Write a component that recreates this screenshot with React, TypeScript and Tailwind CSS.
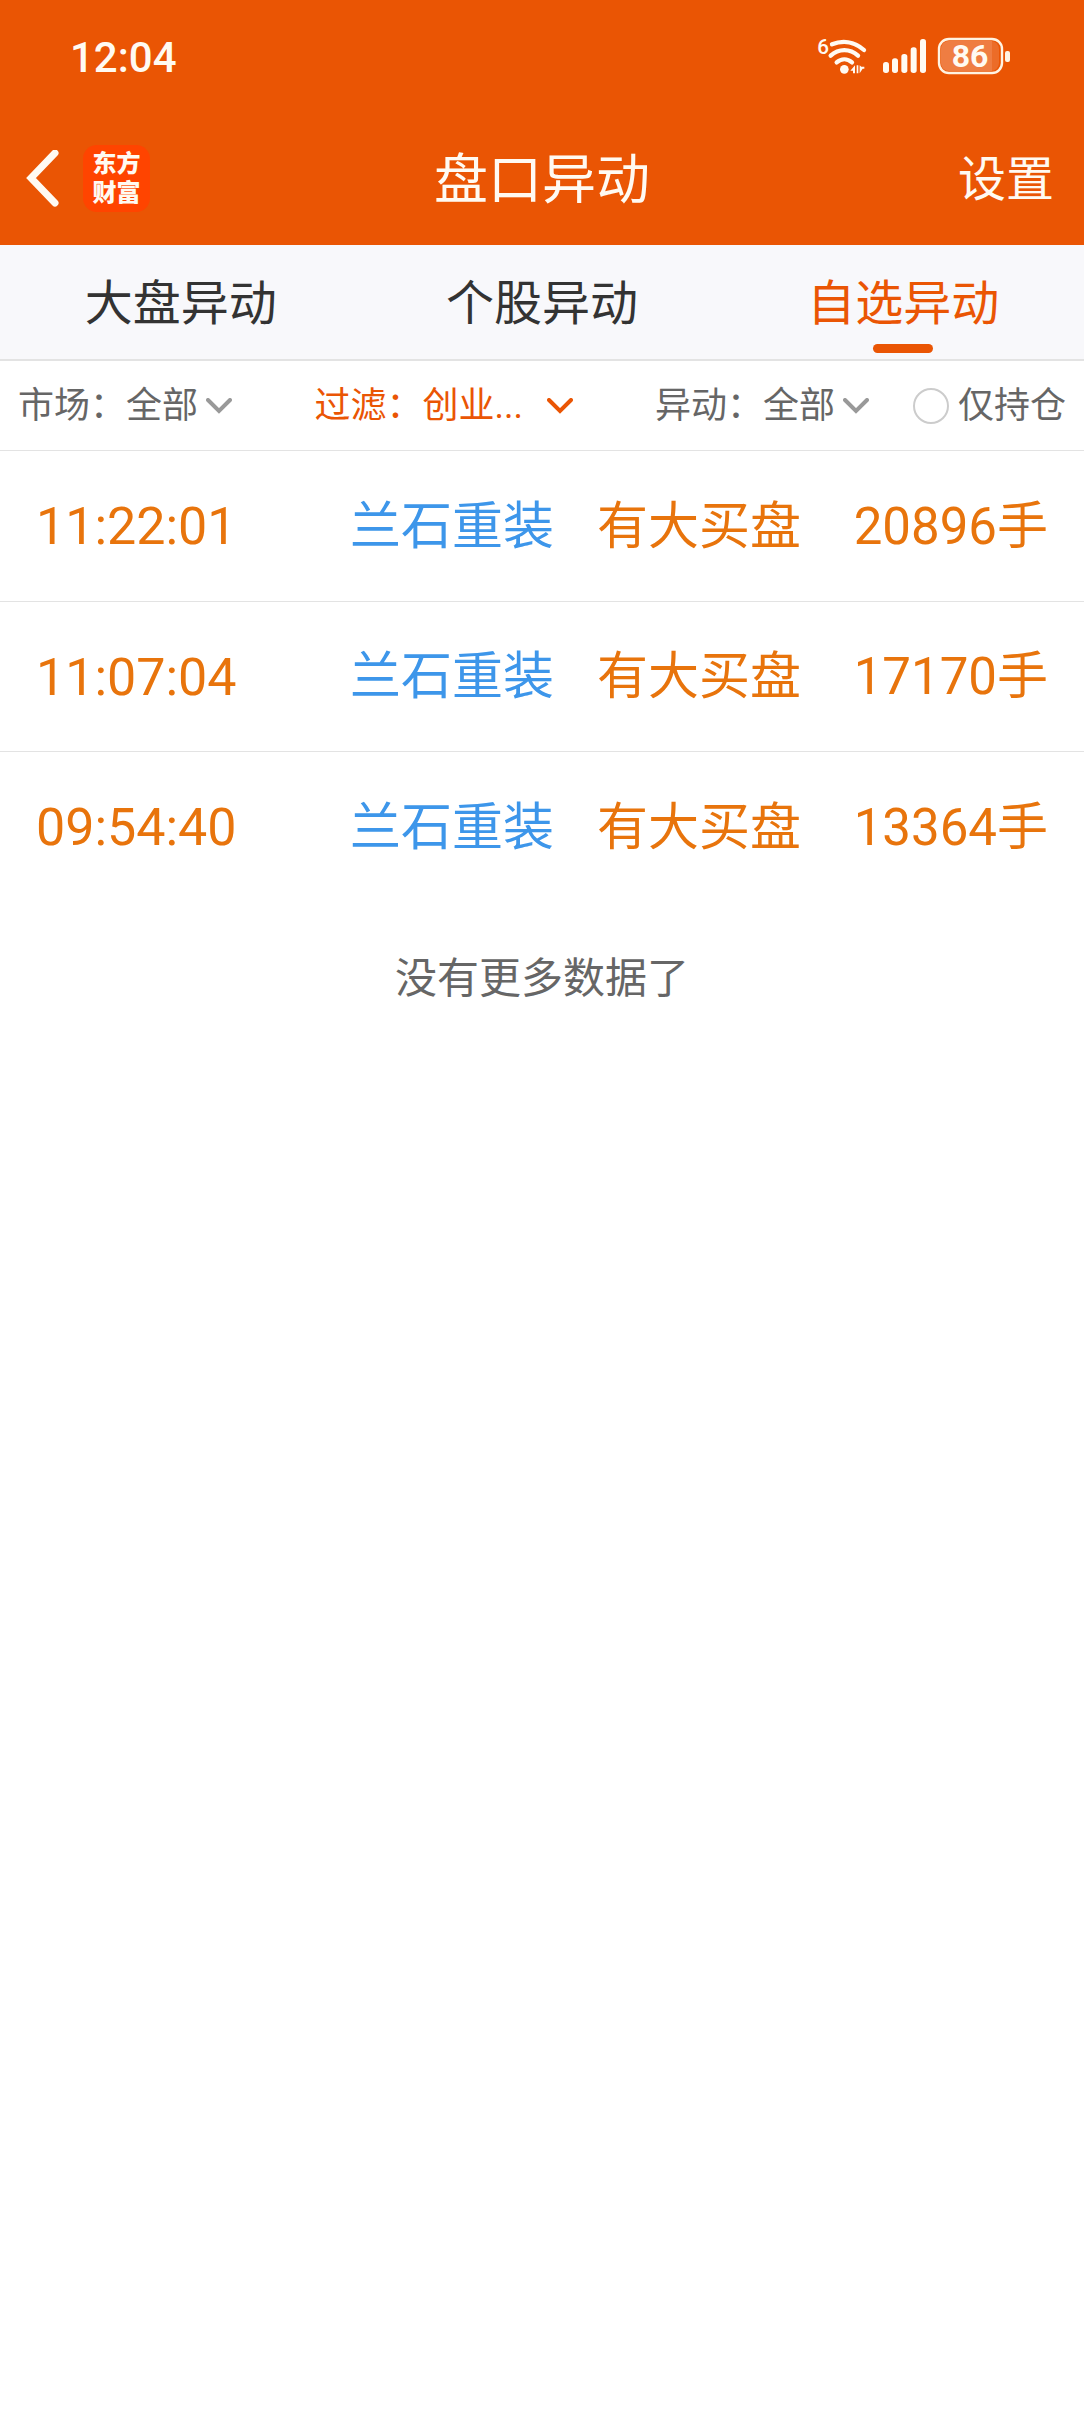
import { useState } from 'react'

interface Alert {
  time: string
  stock: string
  event: string
  volume: string
}

const TABS = ['大盘异动', '个股异动', '自选异动']

const ALERTS: Alert[] = [
  { time: '11:22:01', stock: '兰石重装', event: '有大买盘', volume: '20896手' },
  { time: '11:07:04', stock: '兰石重装', event: '有大买盘', volume: '17170手' },
  { time: '09:54:40', stock: '兰石重装', event: '有大买盘', volume: '13364手' },
]

function WifiIcon() {
  return (
    <svg width="54" height="48" viewBox="38 33 162 144" fill="none" stroke="currentColor" aria-hidden="true">
      <text x="48" y="100" fontSize="62" fontWeight="500" fill="currentColor" stroke="none">6</text>
      <path d="M92 70C122 58 158 60 188 87" strokeWidth="13" strokeLinecap="round" />
      <path d="M88 104C112 82 146 82 170 104" strokeWidth="13" strokeLinecap="round" />
      <path d="M106 124C120 112 138 112 152 124" strokeWidth="13" strokeLinecap="round" />
      <circle cx="129" cy="145" r="13" fill="currentColor" stroke="none" />
      <path d="M147 149L161 133V157H155V149ZM166 133H171V157H166ZM175 133V157L184 143H189V137H180Z" fill="currentColor" stroke="none" />
    </svg>
  )
}

function SignalIcon() {
  return (
    <svg width="44" height="36" viewBox="246 53 132 108" fill="currentColor" aria-hidden="true">
      <rect x="246" y="125" width="18" height="33" rx="8" />
      <rect x="273" y="114" width="18" height="44" rx="8" />
      <rect x="301" y="101" width="18" height="57" rx="8" />
      <rect x="329" y="81" width="18" height="77" rx="8" />
      <rect x="357" y="56" width="18" height="102" rx="8" />
    </svg>
  )
}

function BatteryIcon({ level }: { level: number }) {
  return (
    <svg width="73" height="38" viewBox="0 0 73 38" fill="none" aria-hidden="true">
      <rect x="4" y="4" width="58" height="30" rx="8" fill="#ec6c28" />
      <path d="M12 4H55V34H12A8 8 0 0 1 4 26V12A8 8 0 0 1 12 4Z" fill="#ef7d42" />
      <rect x="2" y="2" width="63" height="34" rx="10" stroke="#fff3e2" strokeWidth="2.4" />
      <rect x="68" y="14" width="5" height="11" rx="2" fill="#fff3e2" />
      <text x="33" y="30" fontSize="32" fontWeight="700" textAnchor="middle" fill="currentColor">{level}</text>
    </svg>
  )
}

function BackIcon() {
  return (
    <svg width="34" height="58" viewBox="0 0 34 58" fill="none" stroke="currentColor" strokeWidth="7" strokeLinecap="round" aria-hidden="true">
      <path d="M29 3L5 28L29 53" />
    </svg>
  )
}

function Header() {
  return (
    <header className="bg-[#ea5504] text-[#fffaf2]">
      <div className="flex h-28 items-center justify-between pl-[70px] pr-[74px]">
        <span className="pt-[3px] text-[42px] font-medium">12:04</span>
        <div className="flex items-center">
          <WifiIcon />
          <span className="ml-[15px] flex"><SignalIcon /></span>
          <span className="ml-[10px] flex"><BatteryIcon level={86} /></span>
        </div>
      </div>
      <div className="grid h-[133px] grid-cols-[1fr_auto_1fr] items-center">
        <div className="flex items-center gap-[23px] pl-[26px]">
          <button type="button" aria-label="返回"><BackIcon /></button>
          <div className="flex h-[67px] w-[67px] items-center justify-center rounded-[14px] bg-[#ff4400]">
            <span className="w-12 text-2xl/[29px] font-black">东方财富</span>
          </div>
        </div>
        <h1 className="pt-[3px] text-[54px]">盘口异动</h1>
        <button type="button" className="justify-self-end pt-[3px] pr-[30px] text-[48px]">设置</button>
      </div>
    </header>
  )
}

interface FilterProps {
  id: string
  label: string
  value: string
  active?: boolean
}

function Filter({ id, label, value, active }: FilterProps) {
  return (
    <div className={'flex items-center ' + (active ? 'text-[#ea5504]' : 'text-[#666]')}>
      <label htmlFor={id}>{label}：</label>
      <div className="relative flex items-center">
        <select id={id} className={'appearance-none bg-transparent ' + (active ? 'w-[150px]' : 'w-[106px]')}>
          <option>{value}</option>
        </select>
        <svg
          width="26"
          height="16"
          viewBox="0 0 26 16"
          fill="none"
          stroke="currentColor"
          strokeWidth="4"
          strokeLinecap="round"
          className={'pointer-events-none absolute right-0 ' + (active ? '' : 'text-[#999]')}
        >
          <path d="M2 2L13 13L24 2" />
        </svg>
      </div>
    </div>
  )
}

export default function App() {
  const [tab, setTab] = useState(TABS[2])
  const [onlyHeld, setOnlyHeld] = useState(false)

  return (
    <div className="min-h-screen bg-white font-['Roboto','Noto_Sans_CJK_SC',sans-serif]">
      <Header />

      <nav className="grid h-[116px] grid-cols-3 border-b-2 border-[#e3e3e3] bg-[#f8f8fb]">
        {TABS.map((t) => (
          <button
            key={t}
            type="button"
            onClick={() => setTab(t)}
            className={'relative flex items-center justify-center pt-[3px] text-[48px] ' + (t === tab ? 'text-[#ea5504]' : 'text-[#333]')}
          >
            {t}
            {t === tab && <span className="absolute bottom-[6px] h-[9px] w-[60px] rounded-full bg-[#ea5504]" />}
          </button>
        ))}
      </nav>

      <div className="flex h-[90px] items-center gap-[44px] border-b border-[#e3e3e3] px-[18px] text-[36px]">
        <div className="flex flex-1 justify-between">
          <Filter id="market" label="市场" value="全部" />
          <Filter id="filter" label="过滤" value="创业..." active />
          <Filter id="event" label="异动" value="全部" />
        </div>
        <label className="flex items-center gap-[9px] text-[#666]">
          <input
            type="checkbox"
            checked={onlyHeld}
            onChange={(e) => setOnlyHeld(e.target.checked)}
            className="h-9 w-9 appearance-none rounded-full border-2 border-[#ccc] checked:bg-[#ea5504]"
          />
          仅持仓
        </label>
      </div>

      <table className="w-full table-fixed text-[51px] text-[#e8740c]">
        <tbody className="divide-y divide-[#e3e3e3]">
          {ALERTS.map((a) => (
            <tr key={a.time} className="h-[150px]">
              <td className="pt-[3px] pl-9 text-[52px]">{a.time}</td>
              <td className="w-[247px] pt-[3px] text-[#3d96ea]">{a.stock}</td>
              <td className="w-[204px] pt-[3px]">{a.event}</td>
              <td className="w-[283px] pt-[3px] pr-9 text-right">{a.volume}</td>
            </tr>
          ))}
        </tbody>
      </table>

      <p className="py-[46px] text-center text-[42px] text-[#666]">没有更多数据了</p>
    </div>
  )
}
